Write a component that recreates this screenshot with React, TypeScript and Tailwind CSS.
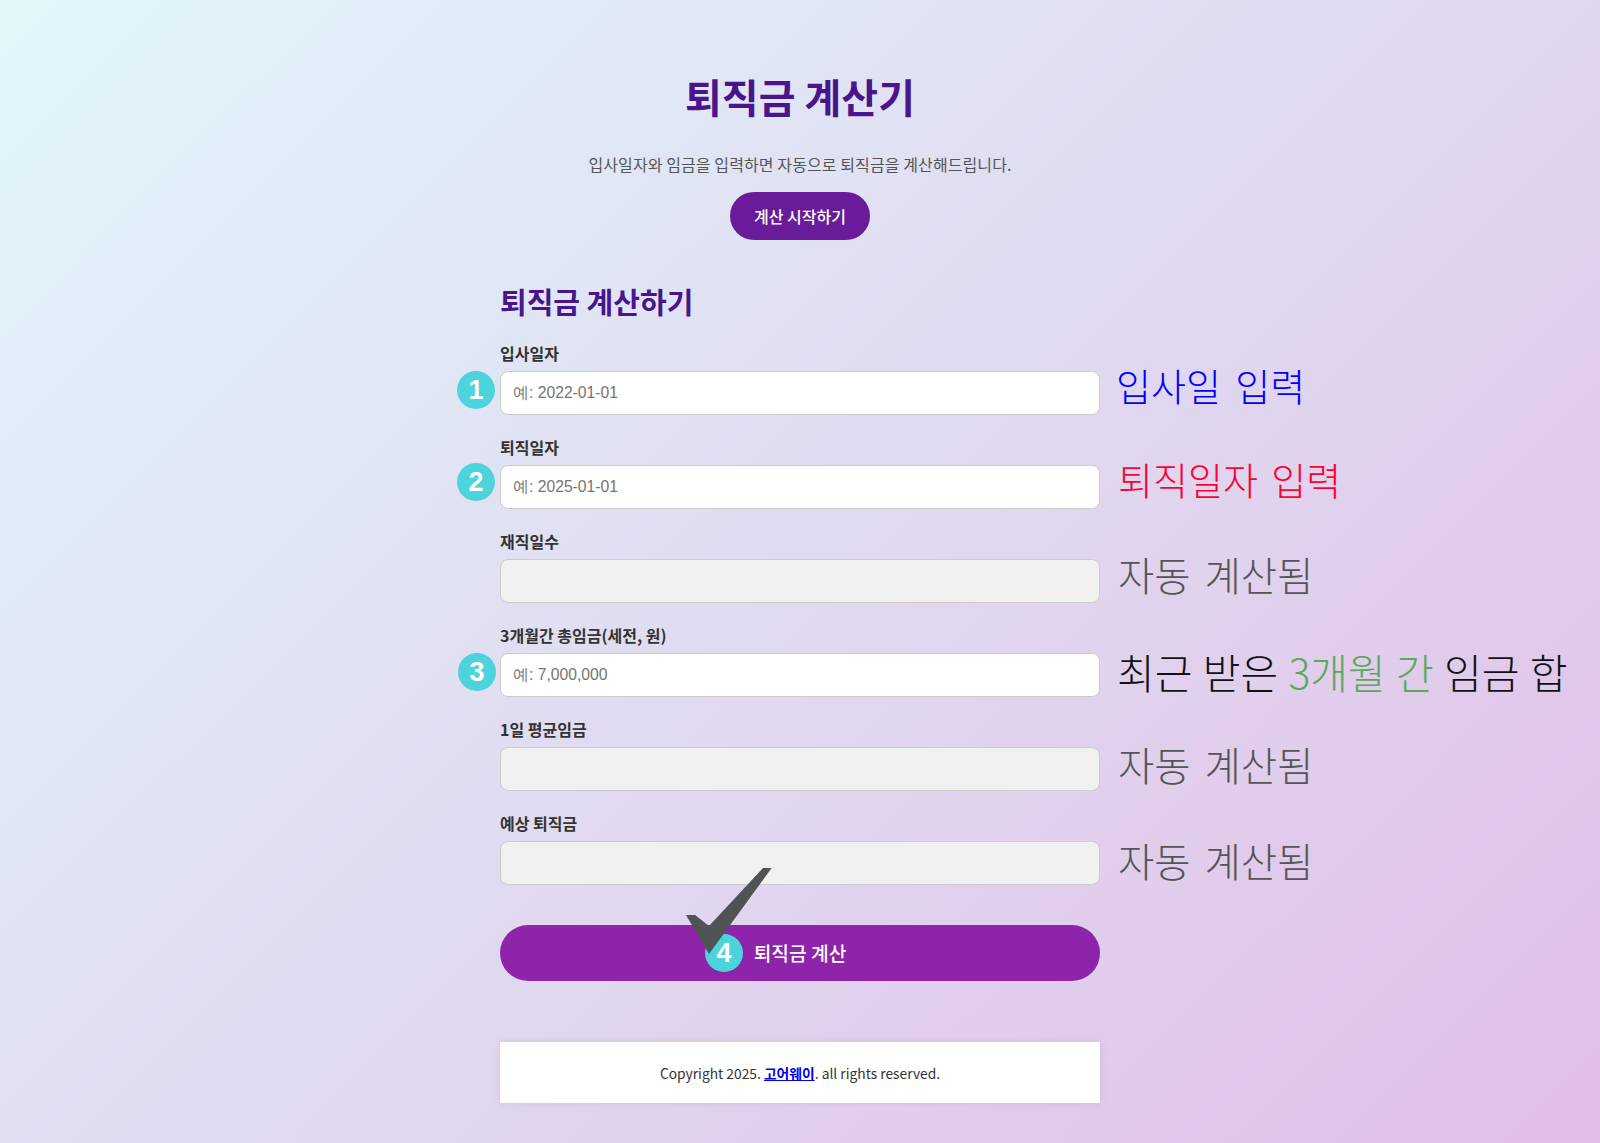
// App.tsx
import type { ReactNode } from 'react';

interface FieldProps {
  label: string;
  placeholder?: string;
  step?: number;
  stepClass?: string;
  note: ReactNode;
  noteClass: string;
}

function StepBadge({ n, className }: { n: number; className: string }) {
  return (
    <span
      className={`absolute flex h-[38px] w-[38px] items-center justify-center rounded-full bg-[#4dd3dc] font-['Liberation_Sans',sans-serif] text-[27px] font-bold text-white ${className}`}
    >
      {n}
    </span>
  );
}

function Field({ label, placeholder, step, stepClass, note, noteClass }: FieldProps) {
  return (
    <div className="relative">
      <label className="mb-[8px] block text-base leading-[20px] font-bold text-[#333]">{label}</label>
      {placeholder ? (
        <input
          placeholder={placeholder}
          className="block h-[44px] w-full rounded-lg border border-[#ccc] bg-white px-3 font-['Liberation_Sans',sans-serif] text-[15.7px] placeholder:text-[#757575]"
        />
      ) : (
        <input disabled className="block h-[44px] w-full rounded-lg border border-[#ccc] bg-[#f0f0f0] px-3 text-base" />
      )}
      {step && <StepBadge n={step} className={stepClass ?? ''} />}
      <span className={`absolute whitespace-nowrap leading-[56px] font-light ${noteClass}`}>{note}</span>
    </div>
  );
}

export default function App() {
  const autoNote = 'left-[618px] text-[39.5px] [word-spacing:5px] text-[#555]';

  return (
    <div className="min-h-screen bg-[linear-gradient(135deg,#e0f7fa,#e1bee7)] pt-[72px] pb-10 font-['Noto_Sans_CJK_KR','Liberation_Sans',sans-serif] text-[#333]">
      <header className="text-center">
        <h1 className="text-[40px] leading-[48px] font-bold text-[#4a148c]">퇴직금 계산기</h1>
        <p className="mt-[32px] text-base leading-6 tracking-[0.1px] text-[#555]">입사일자와 임금을 입력하면 자동으로 퇴직금을 계산해드립니다.</p>
        <button className="mt-[16px] h-12 w-[140px] rounded-3xl bg-[#6a1b9a] text-base font-medium text-white">계산 시작하기</button>
      </header>

      <main className="mx-auto mt-[43px] w-[600px]">
        <h2 className="mb-[24px] text-[29px] leading-9 font-bold text-[#4a148c]">퇴직금 계산하기</h2>
        <div className="flex flex-col gap-[22px]">
          <Field
            label="입사일자"
            placeholder="예: 2022-01-01"
            step={1}
            stepClass="top-[28px] left-[-43px]"
            note="입사일 입력"
            noteClass="left-[616px] top-[14px] text-[38px] [word-spacing:6px] text-[#0000ff]"
          />
          <Field
            label="퇴직일자"
            placeholder="예: 2025-01-01"
            step={2}
            stepClass="top-[26px] left-[-43px]"
            note="퇴직일자 입력"
            noteClass="left-[618px] top-[14px] text-[38px] [word-spacing:5px] text-[#ff0033]"
          />
          <Field label="재직일수" note="자동 계산됨" noteClass={`top-[15px] ${autoNote}`} />
          <Field
            label="3개월간 총임금(세전, 원)"
            placeholder="예: 7,000,000"
            step={3}
            stepClass="top-[28px] left-[-42px]"
            note={
              <>
                최근 받은 <span className="text-[#5aa85a]">3개월 간</span> 임금 합
              </>
            }
            noteClass="left-[617px] top-[18px] text-[41px] [word-spacing:1.2px] text-[#111]"
          />
          <Field label="1일 평균임금" note="자동 계산됨" noteClass={`top-[17px] ${autoNote}`} />
          <Field label="예상 퇴직금" note="자동 계산됨" noteClass={`top-[19px] ${autoNote}`} />
        </div>

        <div className="relative mt-10">
          <button className="h-14 w-full rounded-[28px] bg-[#8e24aa] text-[19.2px] font-medium text-white">퇴직금 계산</button>
          <StepBadge n={4} className="left-[205px] top-[9px]" />
          <svg className="absolute left-[186px] top-[-57px]" width="86" height="86" viewBox="0 0 86 86">
            <polygon points="77,0 85.7,0 23,86 0,47 9,47 23,58" fill="#4f5356" />
          </svg>
        </div>

        <footer className="mt-[61px] h-[61px] bg-white pt-[19px] text-center text-[13.8px] leading-6 text-[#333] shadow-[0_0_8px_rgba(0,0,0,0.08)]">
          Copyright 2025. <a href="#" className="font-bold text-[#0000ee] underline">고어웨이</a>. all rights reserved.
        </footer>
      </main>
    </div>
  );
}
